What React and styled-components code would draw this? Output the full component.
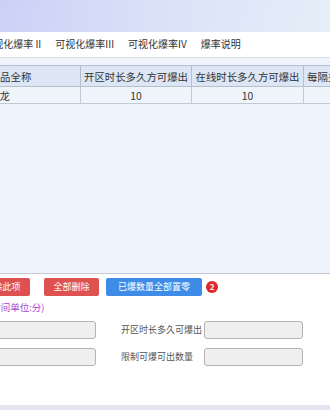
import styled, { createGlobalStyle } from 'styled-components';

const GlobalStyle = createGlobalStyle`
  html, body {
    margin: 0;
    padding: 0;
    background: #fff;
  }
  body {
    font-family: "Noto Sans CJK SC", "Noto Sans", sans-serif;
    color: #333;
  }
`;

const Screen = styled.div`
  width: 330px;
  height: 410px;
  overflow: hidden;
  display: flex;
  flex-direction: column;
  background: #fff;
`;

const Banner = styled.div`
  flex: none;
  height: 32px;
  background: linear-gradient(100deg, #cdd0f6 0%, #dbe2f8 50%, #e4eff8 100%);
`;

// the visible part is a window onto a wider page, so the panel starts off-screen
const Panel = styled.div`
  flex: 1;
  margin-left: -120px;
  width: 480px;
  display: flex;
  flex-direction: column;
`;

const TabBar = styled.div`
  height: 26px;
  padding: 0 0 2px 34px;
  box-sizing: border-box;
  display: flex;
  align-items: center;
  gap: 14px;
  border-bottom: 1px solid #dcdfe5;
  background: #fff;
`;

const Tab = styled.span`
  font-size: 10px;
  line-height: 1;
  white-space: nowrap;
  color: #333;
`;

const TableArea = styled.div`
  height: 216px;
  box-sizing: border-box;
  padding-top: 7px;
  background: #eef3fc;
  border-bottom: 1px solid #c5cad3;
`;

const Grid = styled.table`
  margin-left: 60px;
  width: 474px;
  table-layout: fixed;
  border-collapse: collapse;
  font-size: 10.4px;
  color: #333;
`;

const Head = styled.th`
  height: 20px;
  padding: 0;
  font-weight: normal;
  text-align: center;
  white-space: nowrap;
  overflow: hidden;
  background: #dce6f4;
  border: 1px solid #b6bfcc;
`;

const Cell = styled.td`
  height: 16px;
  padding: 0 0 0 ${({ $pad }) => $pad || 0}px;
  text-align: ${({ $left }) => ($left ? 'left' : 'center')};
  white-space: nowrap;
  overflow: hidden;
  background: #f0f5fc;
  border: 1px solid #c3cad5;
`;

const Actions = styled.div`
  margin-top: 4px;
  height: 18px;
  padding-left: 95px;
  display: flex;
  align-items: center;
`;

const Button = styled.button`
  flex: none;
  width: ${({ $w }) => $w}px;
  height: 18px;
  margin-left: ${({ $gap }) => $gap || 0}px;
  padding: 0;
  border: none;
  border-radius: 2px;
  font-family: inherit;
  font-size: 9px;
  line-height: 18px;
  color: #fff;
  background: ${({ $blue }) => ($blue ? '#3e8ce8' : '#dd5151')};
`;

const Badge = styled.span`
  flex: none;
  width: 12px;
  height: 12px;
  margin-left: 4px;
  border-radius: 50%;
  background: #e2262b;
  color: #fff;
  font-size: 8px;
  font-weight: bold;
  line-height: 12px;
  text-align: center;
`;

const Hint = styled.div`
  margin-top: 5px;
  padding-left: 108px;
  font-size: 9.5px;
  line-height: 12px;
  color: #a63fd4;
  white-space: nowrap;
`;

const Form = styled.div`
  margin-top: 8px;
  padding-left: 34px;
  display: grid;
  grid-template-columns: 182px 182px;
  column-gap: 25px;
  row-gap: 9px;
`;

const Field = styled.div`
  display: flex;
  align-items: center;
  height: 18px;
`;

const Label = styled.label`
  flex: none;
  width: 83px;
  font-size: 9px;
  line-height: 18px;
  color: #555;
  white-space: nowrap;
`;

const Input = styled.input`
  flex: none;
  box-sizing: border-box;
  width: 99px;
  height: 18px;
  margin: 0;
  border: 1px solid #b4b4b4;
  border-radius: 3px;
  background: #efefef;
`;

const Footer = styled.div`
  flex: none;
  height: 5px;
  background: #e4e5f1;
`;

const tabs = ['可视化爆率 I', '可视化爆率 II', '可视化爆率III', '可视化爆率IV', '爆率说明'];

const fields = ['在线时长多久可爆出', '开区时长多久可爆出', '每隔多久可爆出', '限制可爆可出数量'];

export default function App() {
  return (
    <Screen>
      <GlobalStyle />
      <Banner />
      <Panel>
        <TabBar>
          {tabs.map((t) => (
            <Tab key={t}>{t}</Tab>
          ))}
        </TabBar>
        <TableArea>
          <Grid>
            <colgroup>
              <col style={{ width: 140 }} />
              <col style={{ width: 111 }} />
              <col style={{ width: 112 }} />
              <col style={{ width: 111 }} />
            </colgroup>
            <thead>
              <tr>
                <Head>物品全称</Head>
                <Head>开区时长多久方可爆出</Head>
                <Head>在线时长多久方可爆出</Head>
                <Head>每隔多久方可爆出一次</Head>
              </tr>
            </thead>
            <tbody>
              <tr>
                <Cell $left $pad={48}>屠龙</Cell>
                <Cell>10</Cell>
                <Cell>10</Cell>
                <Cell>10</Cell>
              </tr>
            </tbody>
          </Grid>
        </TableArea>
        <Actions>
          <Button $w={55}>删除此项</Button>
          <Button $w={55} $gap={14}>全部删除</Button>
          <Button $w={96} $gap={7} $blue>已爆数量全部置零</Button>
          <Badge>2</Badge>
        </Actions>
        <Hint>(时间单位:分)</Hint>
        <Form>
          {fields.map((f) => (
            <Field key={f}>
              <Label>{f}</Label>
              <Input />
            </Field>
          ))}
        </Form>
      </Panel>
      <Footer />
    </Screen>
  );
}
